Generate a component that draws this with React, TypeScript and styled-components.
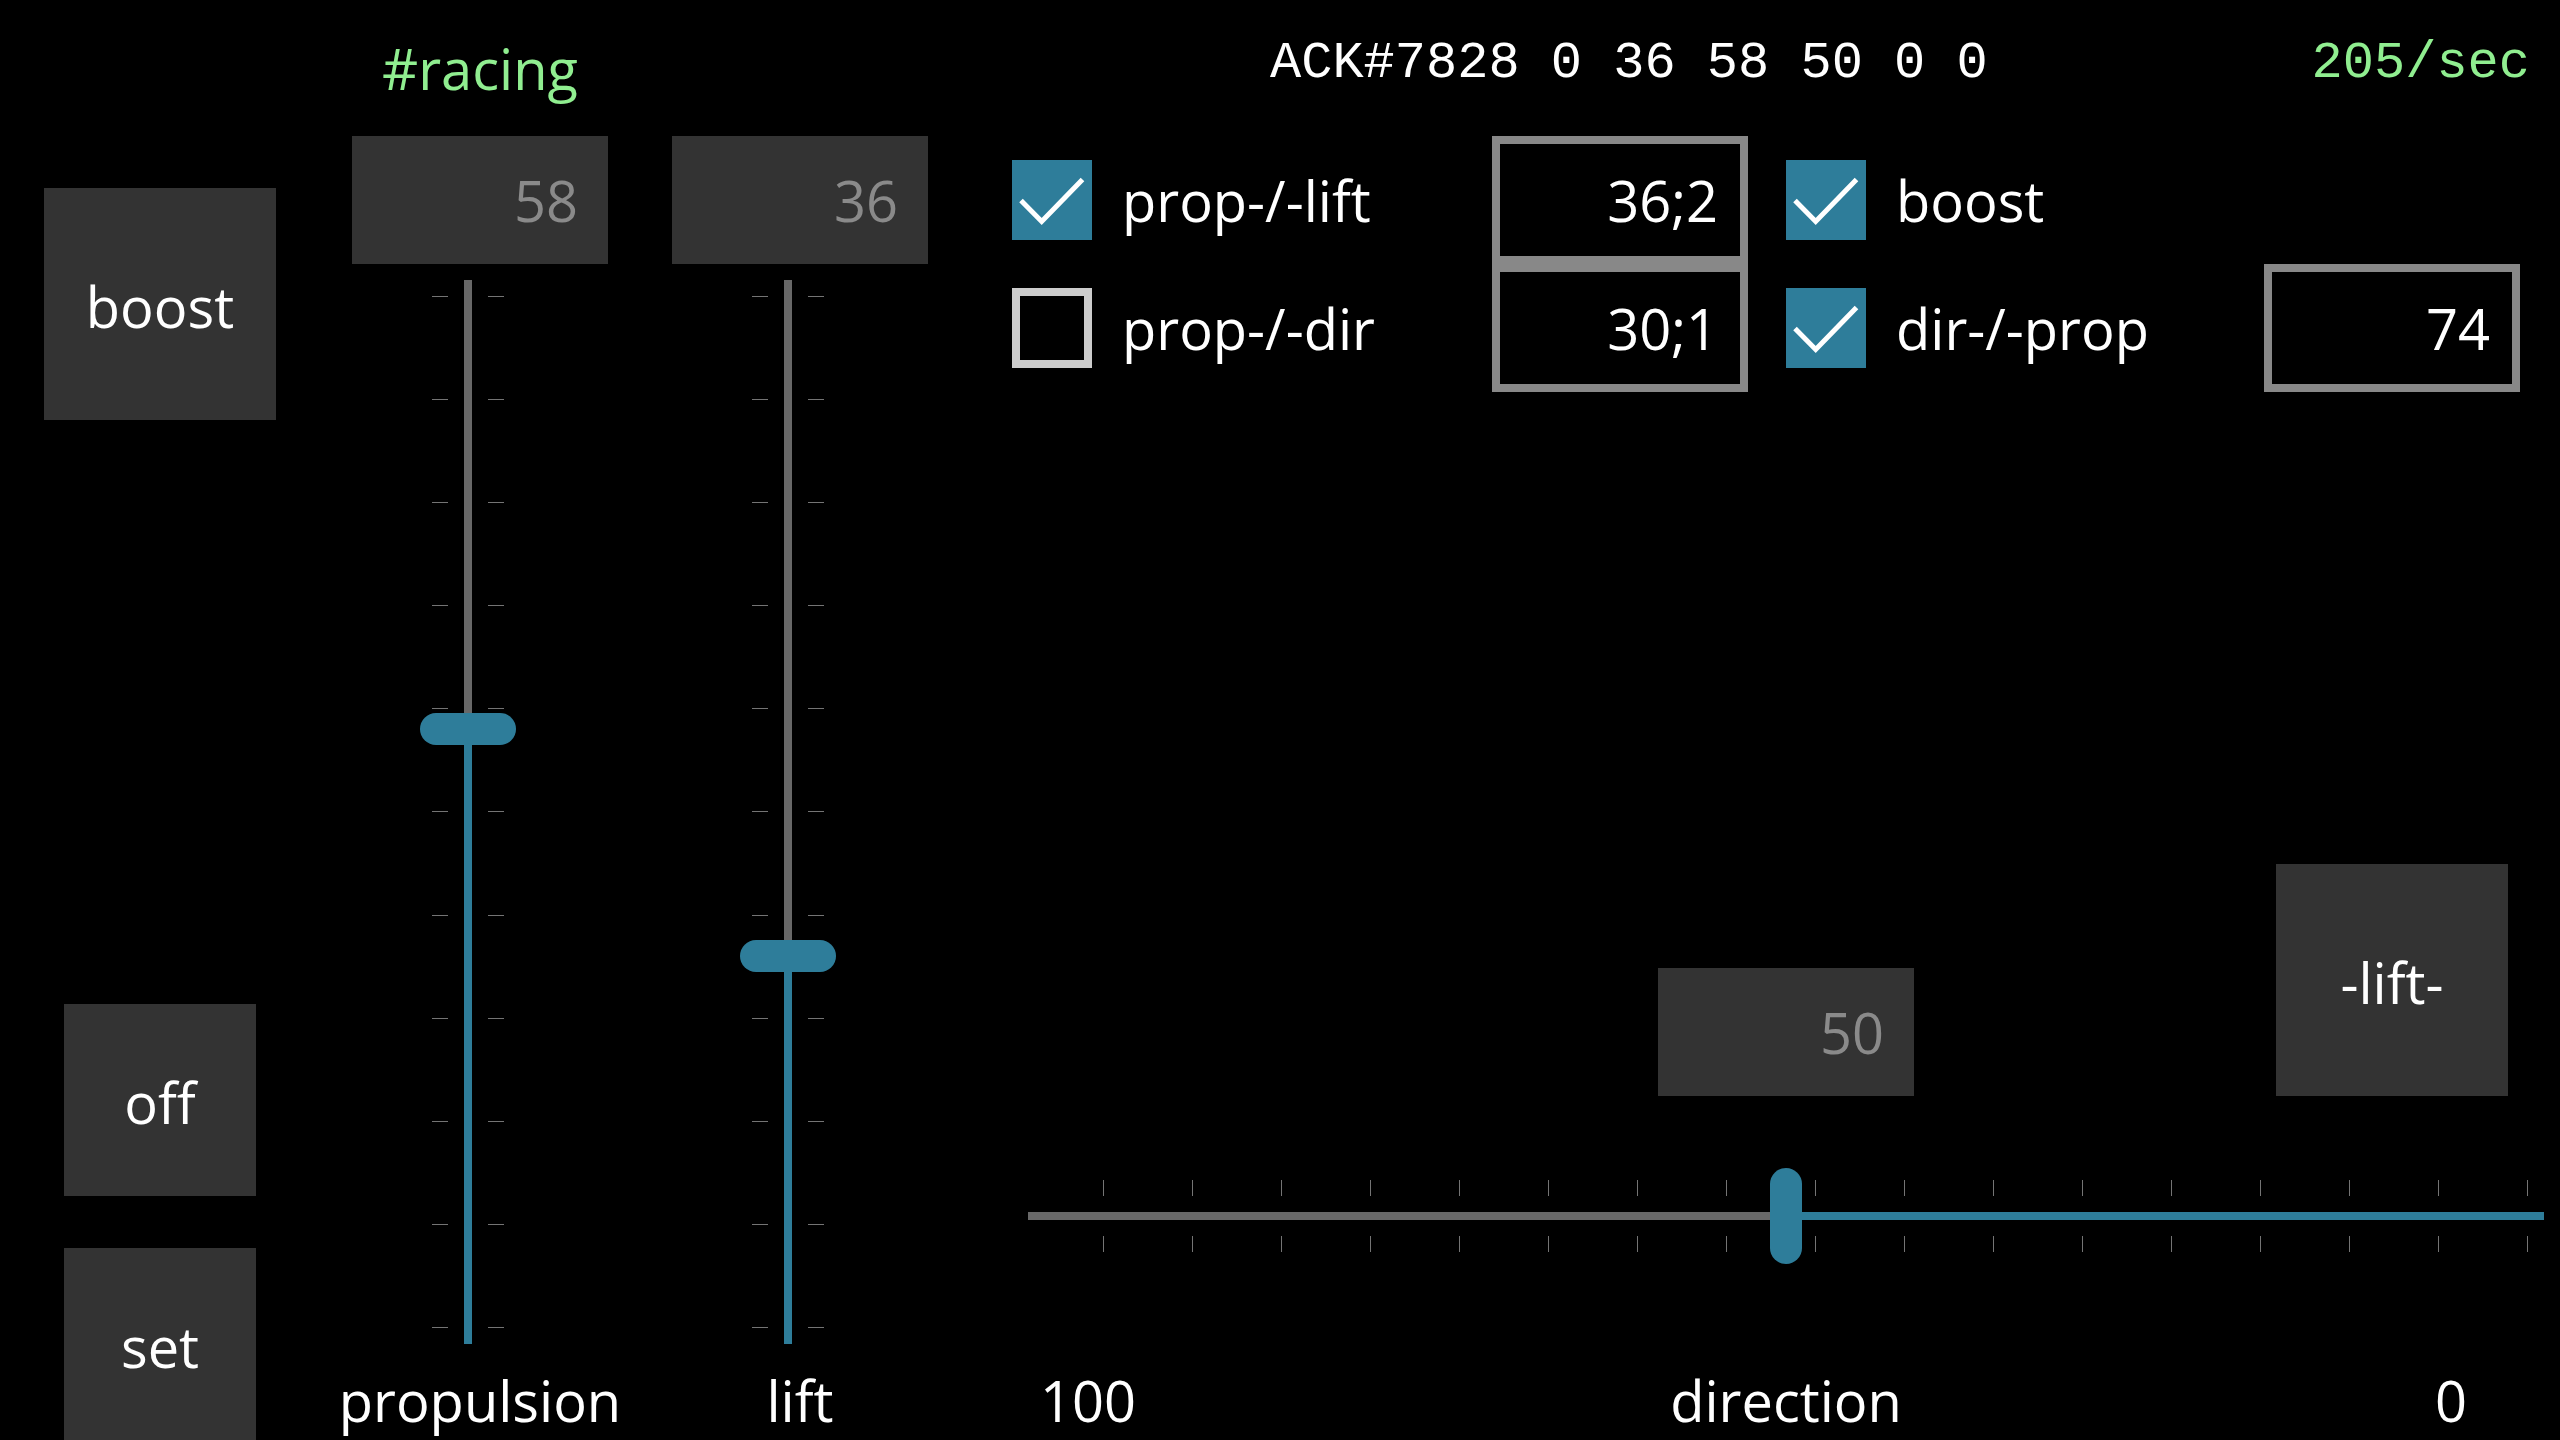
import React from "react";
import styled, { createGlobalStyle } from "styled-components";

const TEAL = "#2e7d9a";
const TRACK_GRAY = "#686868";
const TICK_GRAY = "#747474";

const GlobalStyle = createGlobalStyle`
  html, body { margin: 0; padding: 0; background: #000; }
  body { font-family: "Open Sans", "Noto Sans", sans-serif; color: #fff; }
  * { box-sizing: border-box; }
`;

const Screen = styled.div`
  width: 2560px;
  height: 1440px;
  overflow: hidden;
  background: #000;
  color: #fff;
  font-family: "Open Sans", "Noto Sans", sans-serif;
  font-size: 56px;
  display: grid;
  grid-template-columns: 320px 320px 320px 1600px;
`;

/* ---------- left buttons ---------- */
const LeftColumn = styled.div`
  height: 1440px;
  display: flex;
  flex-direction: column;
  align-items: center;
  padding-top: 188px;
  gap: 52px;
`;

const Tile = styled.button<{ $size: number; $push?: boolean }>`
  width: ${(p) => p.$size}px;
  height: ${(p) => p.$size}px;
  flex: none;
  margin-top: ${(p) => (p.$push ? "auto" : "0")};
  border: none;
  background: #333333;
  color: #ffffff;
  font-family: inherit;
  font-size: 56px;
  display: flex;
  align-items: center;
  justify-content: center;
  padding: 4px 0 0;
  cursor: pointer;
`;

/* ---------- vertical sliders ---------- */
const SliderColumn = styled.div`
  display: flex;
  flex-direction: column;
  align-items: center;
`;

const Title = styled.div`
  height: 136px;
  line-height: 136px;
  color: #90ee90;
  white-space: nowrap;
`;

const ValueBox = styled.div`
  width: 256px;
  height: 128px;
  flex: none;
  background: #333333;
  color: #8a8a8a;
  display: flex;
  align-items: center;
  justify-content: flex-end;
  padding-right: 30px;
`;

const VFrame = styled.div`
  position: relative;
  width: 96px;
  height: 1064px;
  margin-top: 16px;
  margin-right: 24px;
  padding: 0 12px;
  display: grid;
  grid-template-columns: 16px 8px 16px;
  column-gap: 16px;
`;

const VTicks = styled.div`
  display: flex;
  flex-direction: column;
  justify-content: space-between;
  padding: 16px 0;
`;

const VTick = styled.div`
  height: 1px;
  background: ${TICK_GRAY};
`;

const VTrack = styled.div`
  display: flex;
  flex-direction: column;
`;

const TrackPart = styled.div<{ $filled?: boolean }>`
  flex: ${(p) => (p.$filled ? "1" : "none")};
  background: ${(p) => (p.$filled ? TEAL : TRACK_GRAY)};
`;

const VThumb = styled.div`
  position: absolute;
  left: 0;
  width: 96px;
  height: 32px;
  border-radius: 16px;
  background: ${TEAL};
`;

const BottomLabel = styled.div`
  height: 80px;
  line-height: 80px;
  margin-top: 16px;
  white-space: nowrap;
`;

/* ---------- right panel ---------- */
const RightPanel = styled.div`
  display: flex;
  flex-direction: column;
  height: 1440px;
`;

const StatusBar = styled.div`
  height: 136px;
  flex: none;
  display: flex;
  justify-content: space-between;
  padding: 34px 30px 0 310px;
  font-family: "Liberation Mono", "Courier New", monospace;
  font-size: 52px;
  line-height: 60px;
  white-space: pre;
`;

const StatusText = styled.span<{ $green?: boolean }>`
  color: ${(p) => (p.$green ? "#90ee90" : "#ffffff")};
`;

const OptionGrid = styled.div`
  display: grid;
  grid-template-columns: 480px 256px 516px 256px;
  grid-template-rows: 128px 128px;
  margin-left: 52px;
  flex: none;
`;

const CheckCell = styled.label<{ $indent?: boolean }>`
  display: flex;
  align-items: center;
  gap: 30px;
  padding-left: ${(p) => (p.$indent ? "38px" : "0")};
  white-space: nowrap;
`;

const CheckBox = styled.span<{ $checked: boolean }>`
  width: 80px;
  height: 80px;
  flex: none;
  display: flex;
  background: ${(p) => (p.$checked ? TEAL : "#000")};
  border: ${(p) => (p.$checked ? "none" : "8px solid #cccccc")};
`;

const EntryBox = styled.div`
  width: 256px;
  height: 128px;
  border: 8px solid #888888;
  background: #000;
  color: #fff;
  display: flex;
  align-items: center;
  justify-content: flex-end;
  padding-right: 22px;
`;

const Spacer = styled.div`
  flex: 1;
`;

const ActionRow = styled.div`
  height: 232px;
  flex: none;
  display: flex;
  align-items: flex-end;
  padding: 0 52px 0 698px;
`;

const ActionTile = styled(Tile)`
  margin-left: auto;
`;

const HFrame = styled.div`
  position: relative;
  width: 1516px;
  height: 96px;
  flex: none;
  margin: 72px 0 0 68px;
  padding: 12px 0;
  display: grid;
  grid-template-rows: 16px 8px 16px;
  row-gap: 16px;
`;

const HTicks = styled.div`
  display: flex;
  flex-direction: row-reverse;
  gap: 88.04px;
  padding-right: 16px;
`;

const HTick = styled.div`
  width: 1px;
  background: ${TICK_GRAY};
`;

const HTrack = styled.div`
  display: flex;
`;

const HThumb = styled.div`
  position: absolute;
  top: 0;
  width: 32px;
  height: 96px;
  border-radius: 16px;
  background: ${TEAL};
`;

const ScaleLabels = styled.div`
  width: 1516px;
  height: 80px;
  flex: none;
  margin: 96px 0 0 68px;
  display: grid;
  grid-template-columns: 1fr auto 1fr;
  line-height: 80px;
`;

const ScaleText = styled.span<{ $align: "left" | "center" | "right" }>`
  text-align: ${(p) => p.$align};
  padding-left: ${(p) => (p.$align === "left" ? "12px" : "0")};
  padding-right: ${(p) => (p.$align === "right" ? "77px" : "0")};
  white-space: nowrap;
`;

/* ---------- pieces ---------- */
const CheckMark = () => (
  <svg width="80" height="80" viewBox="0 0 80 80">
    <polyline
      points="9,40.5 29.7,61.5 70.5,19.5"
      fill="none"
      stroke="#ffffff"
      strokeWidth="5"
      strokeLinejoin="miter"
    />
  </svg>
);

const Check = ({ checked, label, indent }: { checked: boolean; label: string; indent?: boolean }) => (
  <CheckCell $indent={indent}>
    <CheckBox $checked={checked}>{checked && <CheckMark />}</CheckBox>
    <span>{label}</span>
  </CheckCell>
);

const V_USABLE = 1032;

const VerticalSlider = ({ value }: { value: number }) => {
  const offset = (1 - value / 100) * V_USABLE;
  const ticks = Array.from({ length: 11 });
  return (
    <VFrame>
      <VTicks>
        {ticks.map((_, i) => (
          <VTick key={i} />
        ))}
      </VTicks>
      <VTrack>
        <TrackPart style={{ height: offset + 16 }} />
        <TrackPart $filled />
      </VTrack>
      <VTicks>
        {ticks.map((_, i) => (
          <VTick key={i} />
        ))}
      </VTicks>
      <VThumb style={{ top: offset }} />
    </VFrame>
  );
};

const H_USABLE = 1484;

const HorizontalSlider = ({ value }: { value: number }) => {
  const offset = ((100 - value) / 100) * H_USABLE;
  const ticks = Array.from({ length: 17 });
  return (
    <HFrame>
      <HTicks>
        {ticks.map((_, i) => (
          <HTick key={i} />
        ))}
      </HTicks>
      <HTrack>
        <TrackPart style={{ width: offset + 16 }} />
        <TrackPart $filled />
      </HTrack>
      <HTicks>
        {ticks.map((_, i) => (
          <HTick key={i} />
        ))}
      </HTicks>
      <HThumb style={{ left: offset }} />
    </HFrame>
  );
};

export default function App() {
  return (
    <>
      <GlobalStyle />
      <Screen>
        <LeftColumn>
          <Tile $size={232}>boost</Tile>
          <Tile $size={192} $push>
            off
          </Tile>
          <Tile $size={192}>set</Tile>
        </LeftColumn>

        <SliderColumn>
          <Title>#racing</Title>
          <ValueBox>58</ValueBox>
          <VerticalSlider value={58} />
          <BottomLabel>propulsion</BottomLabel>
        </SliderColumn>

        <SliderColumn>
          <Title />
          <ValueBox>36</ValueBox>
          <VerticalSlider value={36} />
          <BottomLabel>lift</BottomLabel>
        </SliderColumn>

        <RightPanel>
          <StatusBar>
            <StatusText>ACK#7828 0 36 58 50 0 0</StatusText>
            <StatusText $green>205/sec</StatusText>
          </StatusBar>

          <OptionGrid>
            <Check checked label="prop-/-lift" />
            <EntryBox>36;2</EntryBox>
            <Check checked label="boost" indent />
            <div />
            <Check checked={false} label="prop-/-dir" />
            <EntryBox>30;1</EntryBox>
            <Check checked label="dir-/-prop" indent />
            <EntryBox>74</EntryBox>
          </OptionGrid>

          <Spacer />

          <ActionRow>
            <ValueBox>50</ValueBox>
            <ActionTile $size={232}>-lift-</ActionTile>
          </ActionRow>

          <HorizontalSlider value={50} />

          <ScaleLabels>
            <ScaleText $align="left">100</ScaleText>
            <ScaleText $align="center">direction</ScaleText>
            <ScaleText $align="right">0</ScaleText>
          </ScaleLabels>
        </RightPanel>
      </Screen>
    </>
  );
}
